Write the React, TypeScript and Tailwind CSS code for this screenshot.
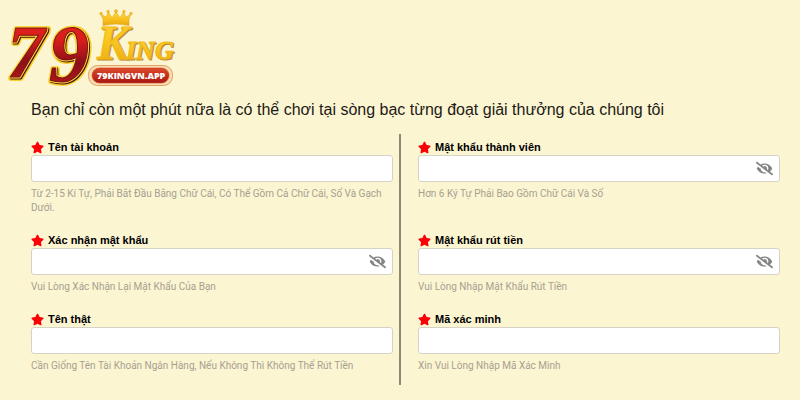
import { useState } from 'react';
import { FaEyeSlash, FaStar } from 'react-icons/fa';

type FieldInfo = {
  id: string;
  label: string;
  hint: string;
  password?: boolean;
};

const leftFields: FieldInfo[] = [
  {
    id: 'username',
    label: 'Tên tài khoản',
    hint: 'Từ 2-15 Kí Tự, Phải Bắt Đầu Bằng Chữ Cái, Có Thể Gồm Cả Chữ Cái, Số Và Gạch Dưới.'
  },
  { id: 'confirm', label: 'Xác nhận mật khẩu', hint: 'Vui Lòng Xác Nhận Lại Mật Khẩu Của Bạn', password: true },
  { id: 'realname', label: 'Tên thật', hint: 'Cần Giống Tên Tài Khoản Ngân Hàng, Nếu Không Thì Không Thể Rút Tiền' }
];

const rightFields: FieldInfo[] = [
  { id: 'password', label: 'Mật khẩu thành viên', hint: 'Hơn 6 Ký Tự Phải Bao Gồm Chữ Cái Và Số', password: true },
  { id: 'withdraw', label: 'Mật khẩu rút tiền', hint: 'Vui Lòng Nhập Mật Khẩu Rút Tiền', password: true },
  { id: 'captcha', label: 'Mã xác minh', hint: 'Xin Vui Lòng Nhập Mã Xác Minh' }
];

const Logo = () => (
  <svg width="180" height="100" viewBox="0 0 180 100" role="img" aria-label="79King">
    <defs>
      <linearGradient id="red" x1="0" y1="0" x2="0" y2="1">
        <stop offset="0" stopColor="#e5231b" />
        <stop offset="0.35" stopColor="#d81e1c" />
        <stop offset="0.6" stopColor="#8c0f1a" />
        <stop offset="1" stopColor="#c41a1c" />
      </linearGradient>
      <linearGradient id="gold" x1="0" y1="0" x2="0" y2="1">
        <stop offset="0" stopColor="#ffd630" />
        <stop offset="0.5" stopColor="#f9c420" />
        <stop offset="1" stopColor="#e8a810" />
      </linearGradient>
      <linearGradient id="pill" x1="0" y1="0" x2="0" y2="1">
        <stop offset="0" stopColor="#dc4a2c" />
        <stop offset="1" stopColor="#a91813" />
      </linearGradient>
    </defs>

    {/* digits: gold rim, dark line, pale line, red face */}
    <g className="font-['Liberation_Serif',serif] font-bold italic" strokeLinejoin="round">
      <g fontSize="75">
        <text x="8" y="78" stroke="#f8cf2c" strokeWidth="6" fill="#f8cf2c">7</text>
        <text x="8" y="78" stroke="#4b1608" strokeWidth="3" fill="#4b1608">7</text>
        <text x="7" y="77" stroke="#ffd94a" strokeWidth="3" fill="#ffd94a">7</text>
        <text x="7" y="77" stroke="#7a1710" strokeWidth="1" fill="url(#red)">7</text>
      </g>
      <g fontSize="80">
        <text x="50" y="82" stroke="#f8cf2c" strokeWidth="6" fill="#f8cf2c">9</text>
        <text x="50" y="82" stroke="#4b1608" strokeWidth="3" fill="#4b1608">9</text>
        <text x="49" y="81" stroke="#ffd94a" strokeWidth="3" fill="#ffd94a">9</text>
        <text x="49" y="81" stroke="#7a1710" strokeWidth="1" fill="url(#red)">9</text>
      </g>
      <g fill="#a8741b" stroke="#b98a35" strokeWidth="1">
        <text x="98" y="60" fontSize="48">K</text>
        <text x="127" y="60" fontSize="26">ING</text>
      </g>
      <g fill="url(#gold)" stroke="#f2b91a" strokeWidth="1">
        <text x="97" y="59" fontSize="48">K</text>
        <text x="126" y="59" fontSize="26">ING</text>
      </g>
    </g>

    {/* crown */}
    <g fill="url(#gold)" stroke="#dfa01a" strokeWidth="0.5">
      <path d="M103 25.500 L103 19 L100.500 14 L106 17 L108.500 12 L112 18 L116 11.500 L120 18 L123.500 12 L126 17 L131 14 L129 19 L129 25.500 Q116 22.500 103 25.500Z" />
      <circle cx="101" cy="13.500" r="1.3" />
      <circle cx="108" cy="11.500" r="1.3" />
      <circle cx="116" cy="11" r="1.5" />
      <circle cx="124" cy="11.500" r="1.3" />
      <circle cx="131" cy="13.500" r="1.3" />
    </g>

    <rect x="88.500" y="65.500" width="84" height="20" rx="9" fill="#fbdcae" stroke="#d9914f" strokeWidth="0.8" />
    <rect x="92" y="68" width="77" height="15" rx="7.500" fill="url(#pill)" stroke="#c94b25" strokeWidth="0.6" />
    <text x="97" y="79" fontSize="9" fill="#fff" className="font-['Open_Sans',sans-serif] font-extrabold">79KINGVN.APP</text>
  </svg>
);

const Field = ({ field }: { field: FieldInfo }) => {
  const [visible, setVisible] = useState(false);

  return (
    <div>
      <label htmlFor={field.id} className="flex h-4 items-center gap-1 text-[11px] leading-4 font-bold text-black">
        <FaStar className="size-[13px] text-[#fb0007]" aria-hidden="true" />
        {field.label}
      </label>
      <div className="flex h-[27px] items-center rounded-[3px] border border-[#d5d3c6] bg-white">
        <input
          id={field.id}
          type={field.password && !visible ? 'password' : 'text'}
          aria-describedby={`${field.id}-hint`}
          className="h-full min-w-0 flex-1 bg-transparent px-2 text-xs outline-none"
        />
        {field.password && (
          <button
            type="button"
            aria-label="Hiện mật khẩu"
            onClick={() => setVisible(!visible)}
            className="px-1.5 text-[#858585]"
          >
            <FaEyeSlash size={17} />
          </button>
        )}
      </div>
      <p id={`${field.id}-hint`} className="mt-[5px] font-['Roboto',sans-serif] text-[10px] leading-3.5 text-[#a5a190]">
        {field.hint}
      </p>
    </div>
  );
};

const App = () => {
  return (
    <main className="min-h-screen bg-[#fcf5d2] font-['Liberation_Sans',Arial,sans-serif]">
      <header>
        <Logo />
        <h1 className="-mt-0.5 pl-[31px] text-base leading-6 text-[#1c1b16]">
          Bạn chỉ còn một phút nữa là có thể chơi tại sòng bạc từng đoạt giải thưởng của chúng tôi
        </h1>
      </header>

      <form className="grid grid-cols-[1fr_25px_1fr] grid-rows-[repeat(3,auto)] grid-flow-col gap-y-[17px] pt-[17px] pr-5 pb-[27px] pl-[31px]">
        {leftFields.map(field => (
          <Field key={field.id} field={field} />
        ))}
        <div className="row-span-3 -mt-[5px] -mb-3 ml-1.5 w-0.5 bg-[#8d8975]" />
        {rightFields.map(field => (
          <Field key={field.id} field={field} />
        ))}
      </form>
    </main>
  );
};

export default App;
